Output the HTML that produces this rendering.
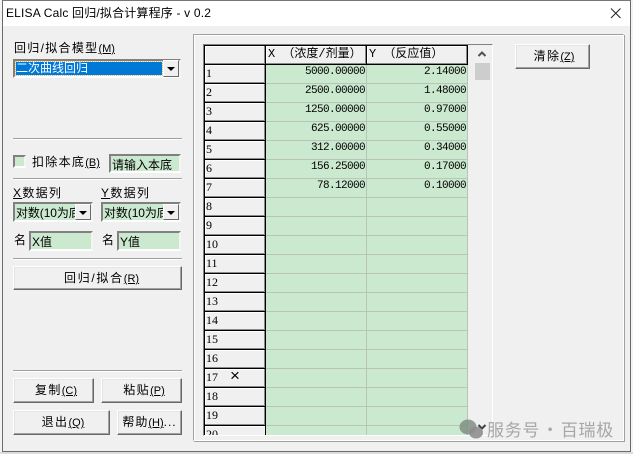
<!DOCTYPE html>
<html><head><meta charset="utf-8"><style>
html,body{margin:0;padding:0}
body{width:633px;height:454px;background:#f3f3f3;position:relative;overflow:hidden;font-family:"Liberation Sans","WenQuanYi Zen Hei","Noto Sans CJK SC",sans-serif;font-size:12px;color:#000}
.a{position:absolute;white-space:nowrap}
.t{letter-spacing:1.3px;line-height:14px;height:14px}
.t i{font-style:normal;font-size:11px;letter-spacing:0;text-decoration:underline}
.btn{position:absolute;box-sizing:border-box;background:#f0f0f0;border:1px solid;border-color:#fff #696969 #696969 #fff;box-shadow:inset -1px -1px 0 #a0a0a0,inset 1px 1px 0 #e3e3e3;text-align:center;line-height:22px;letter-spacing:1.4px;padding-left:3px}
.btn i{font-style:normal;font-size:11px;letter-spacing:0;text-decoration:underline}
.inp{position:absolute;box-sizing:border-box;background:#cbe9cf;border:2px solid;border-color:#808080 #f4f4f4 #fff #808080;white-space:nowrap;overflow:hidden;line-height:19px;padding-left:1px}
.hr{position:absolute;left:13px;width:169px;height:1px;background:#a0a0a0;box-shadow:0 1px 0 #fff}
.arr{position:absolute;box-sizing:border-box;background:#f0f0f0;border:1px solid;border-color:#fff #696969 #696969 #fff}
.arr:after{content:"";position:absolute;left:3px;top:6px;border:4px solid transparent;border-top:4px solid #000;border-bottom:0}
.rh{position:absolute;left:205px;width:61px;height:19px;box-sizing:border-box;background:#f0f0f0;border-right:1px solid #000;border-bottom:1px solid #000;box-shadow:inset -1px -1px 0 #8a8a8a,inset 1px 1px 0 #fff;font-size:12px;line-height:16px;padding-left:1px;font-family:"Liberation Serif",serif}
.ch{position:absolute;top:46px;height:19px;box-sizing:border-box;background:#f0f0f0;border-right:1px solid #000;border-bottom:1px solid #000;box-shadow:inset -1px -1px 0 #8a8a8a,inset 1px 1px 0 #fff;padding-left:2px;line-height:17px;font-family:"Liberation Mono","WenQuanYi Zen Hei",monospace;font-size:12px;white-space:nowrap;overflow:hidden}
.n{position:absolute;text-align:right;font-family:"Liberation Mono",monospace;font-size:11px;line-height:19px;height:19px;letter-spacing:-.6px}
.hl{position:absolute;left:266px;width:202px;height:1px;background:#b8c4b8}
</style></head><body>
<div class="a" style="left:2px;top:0;width:629px;height:452px;box-sizing:border-box;border:1px solid #6b6b6b;background:#f0f0f0;border-top:1px solid #777"></div>
<div class="a" style="left:0;top:452px;width:633px;height:2px;background:#dcdcdc"></div>
<div class="a" style="left:3px;top:1px;width:627px;height:25px;background:#fff"></div>
<div class="a" style="left:6px;top:5px;font-size:12px;line-height:16px;letter-spacing:.18px;color:#000">ELISA Calc 回归/拟合计算程序 - v 0.2</div>
<svg class="a" style="left:610px;top:7px" width="12" height="12"><path d="M1 1.5L10.5 11M10.5 1.5L1 11" stroke="#222" stroke-width="1" fill="none"/></svg>

<div class="a t" style="left:14px;top:41px">回归/拟合模型<i>(M)</i></div>
<div class="a" style="left:13px;top:59px;width:168px;height:19px;box-sizing:border-box;border:2px solid;border-color:#808080 #f4f4f4 #fff #808080;background:#f0f0f0"></div>
<div class="a" style="left:16px;top:62px;width:146px;height:13px;background:#0078d7;color:#fff;line-height:13px;outline:1px dotted #e8c060">二次曲线回归</div>
<div class="arr" style="left:163px;top:60px;width:16px;height:17px"></div>

<div class="hr" style="top:138px"></div>
<div class="a" style="left:13px;top:155px;width:13px;height:13px;box-sizing:border-box;border:2px solid;border-color:#808080 #f4f4f4 #fff #808080;background:#cbe9cf"></div>
<div class="a t" style="left:32px;top:155px">扣除本底<i>(B)</i></div>
<div class="inp" style="left:109px;top:154px;width:72px;height:19px">请输入本底</div>
<div class="hr" style="top:178px"></div>
<div class="a t" style="left:13px;top:186px"><span style="text-decoration:underline">X</span>数据列</div>
<div class="a t" style="left:101px;top:186px"><span style="text-decoration:underline">Y</span>数据列</div>
<div class="inp" style="left:13px;top:202px;width:80px;height:20px;letter-spacing:-.1px">对数(10为底</div>
<div class="arr" style="left:75px;top:204px;width:16px;height:16px"></div>
<div class="inp" style="left:101px;top:202px;width:80px;height:20px;letter-spacing:-.1px">对数(10为底</div>
<div class="arr" style="left:163px;top:204px;width:16px;height:16px"></div>
<div class="a" style="left:14px;top:233px;line-height:14px">名</div>
<div class="inp" style="left:29px;top:231px;width:64px;height:20px">X值</div>
<div class="a" style="left:102px;top:233px;line-height:14px">名</div>
<div class="inp" style="left:117px;top:231px;width:64px;height:20px">Y值</div>
<div class="hr" style="top:258px"></div>
<div class="btn" style="left:13px;top:266px;width:169px;height:24px;letter-spacing:1.7px;padding-left:8px">回归/拟合<i>(R)</i></div>

<div class="hr" style="top:370px"></div>
<div class="btn" style="left:13px;top:378px;width:81px;height:25px;padding-left:5px">复制<i>(C)</i></div>
<div class="btn" style="left:101px;top:378px;width:81px;height:25px;padding-left:5px">粘贴<i>(P)</i></div>
<div class="btn" style="left:13px;top:410px;width:97px;height:25px">退出<i>(Q)</i></div>
<div class="btn" style="left:117px;top:410px;width:65px;height:25px;padding-left:0;letter-spacing:1px">帮助<i>(H)</i>...</div>

<!-- group frame -->
<div class="a" style="left:193px;top:34px;width:431px;height:407px;box-sizing:border-box;border:1px solid #a0a0a0;border-right-color:#fff;border-bottom-color:#fff;box-shadow:inset 1px 1px 0 #fff,1px 1px 0 #a0a0a0"></div>
<!-- grid frame -->
<div class="a" style="left:203px;top:44px;width:290px;height:392px;box-sizing:border-box;border:1px solid #808080;border-right-color:#fff;border-bottom-color:#fff"></div>
<div class="a" style="left:204px;top:45px;width:288px;height:390px;background:#f0f0f0"></div>
<div class="a" style="left:266px;top:65px;width:202px;height:370px;background:#cbe9cf"></div>
<div class="a" style="left:366px;top:65px;width:1px;height:370px;background:#b8c4b8"></div>
<div class="a" style="left:467px;top:65px;width:1px;height:370px;background:#b8c4b8"></div>
<div class="a" style="left:204px;top:45px;width:264px;height:1px;background:#000"></div>
<div class="a" style="left:204px;top:45px;width:1px;height:390px;background:#000"></div>

<!-- headers -->
<div class="rh" style="top:46px"></div>
<div class="ch" style="left:266px;width:101px">X （浓度/剂量）</div>
<div class="ch" style="left:367px;width:101px">Y （反应值）</div>

<div class="rh" style="top:65px">1</div><div class="rh" style="top:84px">2</div><div class="rh" style="top:103px">3</div><div class="rh" style="top:122px">4</div><div class="rh" style="top:141px">5</div><div class="rh" style="top:160px">6</div><div class="rh" style="top:179px">7</div><div class="rh" style="top:198px">8</div><div class="rh" style="top:217px">9</div><div class="rh" style="top:236px">10</div><div class="rh" style="top:255px">11</div><div class="rh" style="top:274px">12</div><div class="rh" style="top:293px">13</div><div class="rh" style="top:312px">14</div><div class="rh" style="top:331px">15</div><div class="rh" style="top:350px">16</div><div class="rh" style="top:369px">17<span style="position:absolute;left:25px;top:-1px;font-size:17px;font-family:'Liberation Sans',sans-serif">×</span></div><div class="rh" style="top:388px">18</div><div class="rh" style="top:407px">19</div><div class="rh" style="top:426px;height:9px;border-bottom:0;box-shadow:inset 1px 1px 0 #fff;overflow:hidden">20</div>

<div class="hl" style="top:83px"></div><div class="hl" style="top:102px"></div><div class="hl" style="top:121px"></div><div class="hl" style="top:140px"></div><div class="hl" style="top:159px"></div><div class="hl" style="top:178px"></div><div class="hl" style="top:197px"></div><div class="hl" style="top:216px"></div><div class="hl" style="top:235px"></div><div class="hl" style="top:254px"></div><div class="hl" style="top:273px"></div><div class="hl" style="top:292px"></div><div class="hl" style="top:311px"></div><div class="hl" style="top:330px"></div><div class="hl" style="top:349px"></div><div class="hl" style="top:368px"></div><div class="hl" style="top:387px"></div><div class="hl" style="top:406px"></div><div class="hl" style="top:425px"></div>

<div class="n" style="left:266px;width:99px;top:63px">5000.00000</div>
<div class="n" style="left:266px;width:99px;top:82px">2500.00000</div>
<div class="n" style="left:266px;width:99px;top:101px">1250.00000</div>
<div class="n" style="left:266px;width:99px;top:120px">625.00000</div>
<div class="n" style="left:266px;width:99px;top:139px">312.00000</div>
<div class="n" style="left:266px;width:99px;top:158px">156.25000</div>
<div class="n" style="left:266px;width:99px;top:177px">78.12000</div>
<div class="n" style="left:367px;width:99px;top:63px">2.14000</div>
<div class="n" style="left:367px;width:99px;top:82px">1.48000</div>
<div class="n" style="left:367px;width:99px;top:101px">0.97000</div>
<div class="n" style="left:367px;width:99px;top:120px">0.55000</div>
<div class="n" style="left:367px;width:99px;top:139px">0.34000</div>
<div class="n" style="left:367px;width:99px;top:158px">0.17000</div>
<div class="n" style="left:367px;width:99px;top:177px">0.10000</div>

<!-- scrollbar -->
<div class="a" style="left:475px;top:63px;width:15px;height:17px;background:#cdcdcd"></div>
<svg class="a" style="left:477px;top:50px" width="11" height="8"><path d="M1.5 6L5 2.5L8.5 6" stroke="#505050" stroke-width="2" fill="none"/></svg>
<svg class="a" style="left:477px;top:423px" width="11" height="8"><path d="M1.5 2L5 5.5L8.5 2" stroke="#404040" stroke-width="2" fill="none"/></svg>

<div class="btn" style="left:515px;top:44px;width:75px;height:25px;line-height:23px">清除<i>(Z)</i></div>

<!-- watermark -->
<svg class="a" style="left:459px;top:419px" width="26" height="20"><ellipse cx="9" cy="8" rx="8.5" ry="7.5" fill="#7f8f84" opacity=".85"/><ellipse cx="17" cy="13.5" rx="7" ry="6" fill="#8e8e8e" opacity=".9"/></svg>
<div class="a" style="left:487px;top:419px;font-size:17px;line-height:20px;color:#a6a6a6;letter-spacing:.7px;word-spacing:-3px;font-family:'Noto Sans CJK SC',sans-serif">服务号 · 百瑞极</div>
</body></html>
